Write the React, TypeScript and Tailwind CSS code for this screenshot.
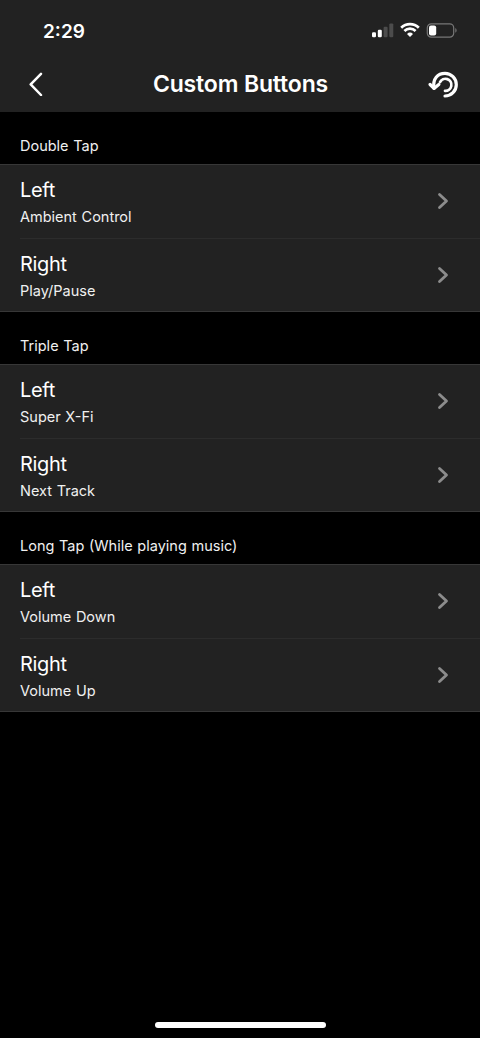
import React from 'react';

const sections = [
    {
        title: 'Double Tap',
        items: [
            { side: 'Left', action: 'Ambient Control' },
            { side: 'Right', action: 'Play/Pause' },
        ],
    },
    {
        title: 'Triple Tap',
        items: [
            { side: 'Left', action: 'Super X-Fi' },
            { side: 'Right', action: 'Next Track' },
        ],
    },
    {
        title: 'Long Tap (While playing music)',
        items: [
            { side: 'Left', action: 'Volume Down' },
            { side: 'Right', action: 'Volume Up' },
        ],
    },
];

const StatusBar: React.FC = () => (
    <div className="flex h-[60px] items-center justify-between pl-[43px] pr-[22px]">
        <span className="pt-[3px] text-[19px] font-semibold leading-6">2:29</span>
        <div className="flex items-center gap-[6px]">
            <svg className="h-4 w-[22px]" viewBox="0 0 22 16" fill="#fff">
                <rect x="0" y="10.2" width="4" height="5" rx="1.2" />
                <rect x="5.8" y="7.8" width="4" height="7.4" rx="1.2" />
                <rect x="11.6" y="4.8" width="4" height="10.4" rx="1.2" fill="#4c4c4c" />
                <rect x="17.3" y="1.4" width="4" height="13.8" rx="1.2" fill="#4c4c4c" />
            </svg>
            <svg className="h-4 w-5" viewBox="0 0 20 16" fill="none" stroke="#fff" strokeWidth="2.7">
                <path d="M1.2 5.7a12.5 12.5 0 0 1 17.6 0" />
                <path d="M4.4 9a8 8 0 0 1 11.2 0" />
                <path d="M10 15 7 11.9a4.4 4.4 0 0 1 6 0z" fill="#fff" stroke="none" />
            </svg>
            <svg className="h-4 w-8" viewBox="0 0 32 16" fill="none">
                <rect x="1.3" y="1.8" width="26.4" height="13.4" rx="4" stroke="#777" strokeWidth="1.2" />
                <rect x="3" y="3.5" width="7.2" height="10" rx="2" fill="#fff" />
                <path d="M29.3 6v4.8c1.8-.8 1.8-4 0-4.8z" fill="#777" />
            </svg>
        </div>
    </div>
);

const Header: React.FC = () => (
    <div className="grid h-[52px] grid-cols-[1fr_auto_1fr] items-start pl-[27px] pr-[26px]">
        <button className="flex h-12 w-8 items-center" aria-label="Back">
            <svg className="h-6 w-[18px]" viewBox="0 0 18 24" fill="none" stroke="#fff" strokeWidth="2.5" strokeLinecap="round" strokeLinejoin="round">
                <path d="M14 1.8 3.7 12.4 14 23" />
            </svg>
        </button>
        <h1 className="text-[23px] font-semibold leading-[48px] tracking-[-0.15px]">Custom Buttons</h1>
        <button className="-mr-[6px] flex h-12 w-8 items-center justify-self-end" aria-label="Reset">
            <svg className="h-8 w-8" viewBox="0 0 32 32" fill="none" stroke="#fff" strokeWidth="3.2" strokeLinecap="round" strokeLinejoin="round">
                <path d="M6 20.2C4.4 10.6 9.8 5.4 17 5.4a11.3 11.3 0 0 1 0 22.6" />
                <path d="M12 14.2a6 6 0 1 1 5 8.6" strokeWidth="2.7" />
                <path d="M2.1 16.5 6 20.4l4.8-3.9" />
            </svg>
        </button>
    </div>
);

const Row: React.FC<{ side: string, action: string, divider: boolean }> = ({ side, action, divider }) => (
    <div className={`ml-5 flex h-[73px] items-center justify-between pr-[31px] ${divider ? 'box-content border-b border-[#2c2c2c]' : ''}`}>
        <div className="pt-[2px]">
            <p className="text-xl leading-7 tracking-[-0.35px]">{side}</p>
            <p className="mt-px text-[14.5px] leading-6 text-[#f0f0f0] [word-spacing:0.6px]">{action}</p>
        </div>
        <svg className="mb-[2px] h-5 w-3" viewBox="0 0 12 20" fill="none" stroke="#8c8c8c" strokeWidth="2.8" strokeLinecap="round" strokeLinejoin="round">
            <path d="M2.5 3.4 9.5 10l-7 6.6" />
        </svg>
    </div>
);

const App: React.FC = () => {
    return (
        <div className="flex h-[1038px] w-[480px] flex-col overflow-hidden bg-black font-['Inter',sans-serif] text-white">
            <header className="bg-[#222222]">
                <StatusBar />
                <Header />
            </header>

            <main className="flex-1">
                {sections.map(section => (
                    <section key={section.title}>
                        <h2 className="flex h-[52px] items-end px-5 pb-[6px] text-[14.5px] leading-6 text-[#f0f0f0] [word-spacing:0.6px]">{section.title}</h2>
                        <div className="h-[148px] border-y border-[#373737] bg-[#222222]">
                            {section.items.map((item, i) => (
                                <Row key={item.side} {...item} divider={i < section.items.length - 1} />
                            ))}
                        </div>
                    </section>
                ))}
            </main>

            {/* Home indicator */}
            <div className="flex justify-center pb-[10px]">
                <div className="h-[6px] w-[171px] rounded-full bg-white" />
            </div>
        </div>
    );
};

export default App;
